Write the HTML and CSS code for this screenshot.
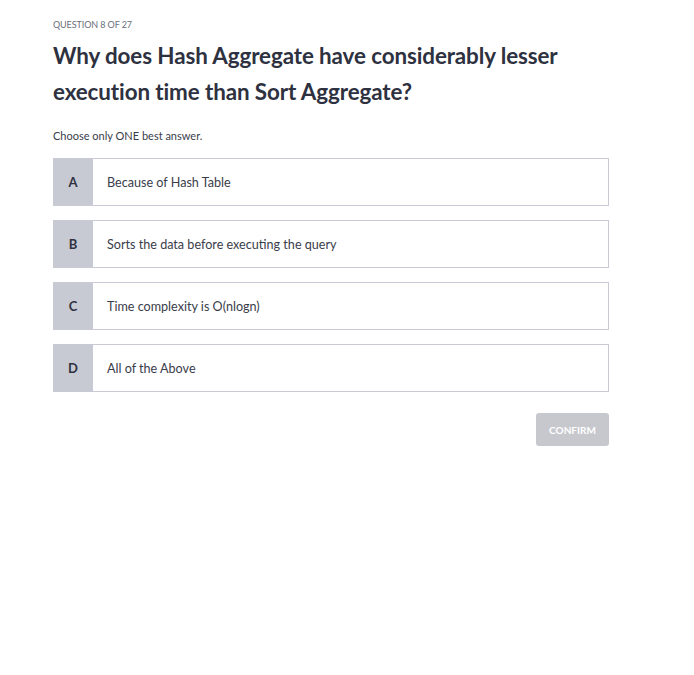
FILE: index.html
```html
<!DOCTYPE html>
<html>
<head>
<meta charset="utf-8">
<link rel="stylesheet" href="styles.css">
</head>
<body>
<main class="quiz">
  <div class="counter">QUESTION 8 OF 27</div>
  <h1 class="question">Why does Hash Aggregate have considerably lesser execution time than Sort Aggregate?</h1>
  <p class="hint">Choose only ONE best answer.</p>
  <div class="options">
    <div class="option"><span class="letter">A</span><span class="text">Because of Hash Table</span></div>
    <div class="option"><span class="letter">B</span><span class="text">Sorts the data before executing the query</span></div>
    <div class="option"><span class="letter">C</span><span class="text">Time complexity is O(nlogn)</span></div>
    <div class="option"><span class="letter">D</span><span class="text">All of the Above</span></div>
  </div>
  <div class="actions"><button class="confirm">CONFIRM</button></div>
</main>
</body>
</html>
```
FILE: styles.css
```css
html, body { margin: 0; padding: 0; background: #fff; }
body { font-family: Lato, "Noto Sans", sans-serif; color: #2e3140; }
.quiz { width: 556px; margin-left: 53px; padding-top: 19px; }
.counter { font-size: 9px; color: #6b6e7a; line-height: 12px; letter-spacing: -0.1px; }
.question { font-size: 22.4px; font-weight: 700; line-height: 36px; margin: 7px 0 0; color: #2e3140; letter-spacing: -0.1px; }
.hint { font-size: 11px; margin: 19px 0 0; line-height: 14px; color: #3a3d4a; }
.options { margin-top: 15px; display: flex; flex-direction: column; gap: 14px; }
.option { display: flex; height: 48px; box-sizing: border-box; border: 1px solid #c9cad5; border-left: none; }
.letter { width: 40px; background: #c8cad3; display: flex; align-items: center; justify-content: center; font-size: 13px; font-weight: 700; color: #2e3140; }
.text { display: flex; align-items: center; padding-left: 14px; font-size: 12.6px; color: #3a3d4a; }
.actions { display: flex; justify-content: flex-end; margin-top: 21px; }
.confirm { width: 73px; height: 33px; border: none; border-radius: 3px; background: #c7c8ce; color: #fff; font-family: inherit; font-weight: 700; font-size: 10px; padding: 0; }
```
